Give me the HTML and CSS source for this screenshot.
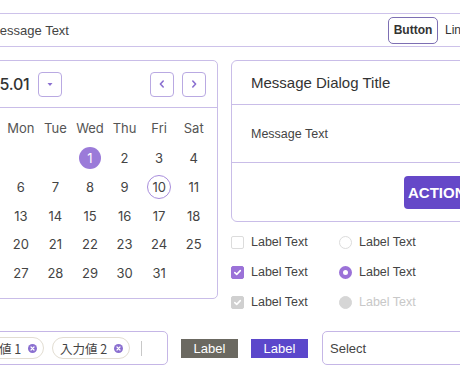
FILE: index.html
```html
<!DOCTYPE html>
<html>
<head>
<meta charset="utf-8">
<link rel="stylesheet" href="styles.css">
</head>
<body>
<div class="page">
  <div class="topbar">
    <span class="topbar-text">Message Text</span>
    <button class="btn-outline">Button</button>
    <a class="link">Link</a>
  </div>

  <div class="main">
    <div class="calendar">
      <div class="cal-head">
        <span class="cal-title">2025.01</span>
        <button class="icon-btn"><svg width="8" height="5" viewBox="0 0 8 5"><path d="M1.5 1h5L4 4z" fill="#8a6fd0"/></svg></button>
        <span class="spacer"></span>
        <button class="icon-btn"><svg width="10" height="10" viewBox="0 0 10 10"><path d="M6.2 2L3.4 5l2.8 3" fill="none" stroke="#8a6fd0" stroke-width="1.6" stroke-linecap="round" stroke-linejoin="round"/></svg></button>
        <button class="icon-btn"><svg width="10" height="10" viewBox="0 0 10 10"><path d="M3.8 2l2.8 3-2.8 3" fill="none" stroke="#8a6fd0" stroke-width="1.6" stroke-linecap="round" stroke-linejoin="round"/></svg></button>
      </div>
      <div class="cal-grid">
        <span class="dow">Sun</span><span class="dow">Mon</span><span class="dow">Tue</span><span class="dow">Wed</span><span class="dow">Thu</span><span class="dow">Fri</span><span class="dow">Sat</span>
        <span></span><span></span><span></span><span class="day"><i class="sel">1</i></span><span class="day">2</span><span class="day">3</span><span class="day">4</span>
        <span class="day">5</span><span class="day">6</span><span class="day">7</span><span class="day">8</span><span class="day">9</span><span class="day"><i class="today">10</i></span><span class="day">11</span>
        <span class="day">12</span><span class="day">13</span><span class="day">14</span><span class="day">15</span><span class="day">16</span><span class="day">17</span><span class="day">18</span>
        <span class="day">19</span><span class="day">20</span><span class="day">21</span><span class="day">22</span><span class="day">23</span><span class="day">24</span><span class="day">25</span>
        <span class="day">26</span><span class="day">27</span><span class="day">28</span><span class="day">29</span><span class="day">30</span><span class="day">31</span><span></span>
      </div>
    </div>

    <div class="side">
      <div class="dialog">
        <div class="dlg-title">Message Dialog Title</div>
        <div class="dlg-body">Message Text</div>
        <div class="dlg-foot"><button class="btn-action">ACTION</button></div>
      </div>
      <div class="choices">
        <label class="choice"><span class="cb"></span>Label Text</label>
        <label class="choice"><span class="rb"></span>Label Text</label>
        <label class="choice"><span class="cb checked"><svg width="9" height="9" viewBox="0 0 9 9"><path d="M1.8 4.6l1.9 1.8 3.6-3.8" fill="none" stroke="#fff" stroke-width="1.6" stroke-linecap="round" stroke-linejoin="round"/></svg></span>Label Text</label>
        <label class="choice"><span class="rb checked"></span>Label Text</label>
        <label class="choice"><span class="cb disabled"><svg width="9" height="9" viewBox="0 0 9 9"><path d="M1.8 4.6l1.9 1.8 3.6-3.8" fill="none" stroke="#fff" stroke-width="1.6" stroke-linecap="round" stroke-linejoin="round"/></svg></span>Label Text</label>
        <label class="choice dim"><span class="rb disabled"></span>Label Text</label>
      </div>
    </div>
  </div>

  <div class="bottom">
    <div class="chips">
      <span class="chip">入力値 1<span class="chip-x"><svg width="9" height="9" viewBox="0 0 9 9"><circle cx="4.5" cy="4.5" r="4.5" fill="#8a6fd0"/><path d="M3 3l3 3M6 3L3 6" stroke="#fff" stroke-width="1.2" stroke-linecap="round"/></svg></span></span>
      <span class="chip">入力値 2<span class="chip-x"><svg width="9" height="9" viewBox="0 0 9 9"><circle cx="4.5" cy="4.5" r="4.5" fill="#8a6fd0"/><path d="M3 3l3 3M6 3L3 6" stroke="#fff" stroke-width="1.2" stroke-linecap="round"/></svg></span></span>
      <span class="caret"></span>
    </div>
    <span class="tag tag-gray">Label</span>
    <span class="tag tag-purple">Label</span>
    <div class="select">Select</div>
  </div>
</div>
</body>
</html>
```

FILE: styles.css
```css
* { box-sizing: border-box; }
html, body { margin: 0; padding: 0; background: #fff; overflow: hidden; }
body { width: 460px; height: 380px; font-family: "Liberation Sans", Arial, sans-serif; color: #444; }
button { font-family: inherit; cursor: pointer; }

.page {
  margin-left: -40px;
  width: 560px;
  padding-top: 13px;
  display: flex;
  flex-direction: column;
}

.topbar {
  height: 34px;
  border-top: 1px solid #cdc2ea;
  border-bottom: 1px solid #cdc2ea;
  display: flex;
  align-items: center;
  padding: 0 53px 0 29px;
}
.topbar-text { flex: 1; font-size: 13px; color: #444; }
.btn-outline {
  height: 27px;
  width: 50px;
  padding: 0;
  border: 1px solid #7d6fb3;
  border-radius: 5px;
  background: #fff;
  font-size: 12px;
  font-weight: bold;
  color: #333;
}
.link { margin-left: 7px; font-size: 12px; color: #333; }

.main {
  margin-top: 13px;
  display: flex;
  gap: 13px;
}

.calendar {
  width: 258px;
  height: 239px;
  border: 1px solid #c9bde8;
  border-radius: 5px;
  display: flex;
  flex-direction: column;
}
.cal-head {
  height: 47px;
  border-bottom: 1px solid #c9bde8;
  display: flex;
  align-items: center;
  gap: 8px;
  padding: 0 11px 0 9px;
  font-family: Inter, "Noto Sans", sans-serif;
}
.cal-title { font-size: 16px; font-weight: 500; color: #333; letter-spacing: -0.2px; }
.spacer { flex: 1; }
.icon-btn {
  width: 24px;
  height: 25px;
  padding: 0;
  border: 1px solid #b9a9e2;
  border-radius: 4px;
  background: #fff;
  display: flex;
  align-items: center;
  justify-content: center;
}
.cal-grid {
  display: grid;
  grid-template-columns: repeat(7, 1fr);
  grid-auto-rows: 28.6px;
  padding: 6px 6px 0 8px;
  font-family: Inter, "Noto Sans", sans-serif;
  font-size: 13px;
  color: #444;
}
.dow, .day { display: flex; align-items: center; justify-content: center; }
.dow { color: #555; }
.cal-grid .day { padding-top: 3px; }
.day i { font-style: normal; }
.sel {
  width: 22px; height: 22px; border-radius: 50%;
  background: #9b7bd9; color: #fff;
  display: flex; align-items: center; justify-content: center;
}
.today {
  width: 24px; height: 24px; border-radius: 50%;
  border: 1px solid #a88ddc;
  display: flex; align-items: center; justify-content: center;
}

.side { display: flex; flex-direction: column; }
.dialog {
  width: 280px;
  height: 162px;
  border: 1px solid #c9bde8;
  border-radius: 6px;
  display: flex;
  flex-direction: column;
}
.dlg-title {
  height: 44px;
  border-bottom: 1px solid #c9bde8;
  padding-left: 19px;
  display: flex;
  align-items: center;
  font-size: 15px;
  color: #333;
}
.dlg-body {
  height: 58px;
  border-bottom: 1px solid #c9bde8;
  padding-left: 19px;
  display: flex;
  align-items: center;
  font-size: 12.5px;
  color: #444;
}
.dlg-foot {
  flex: 1;
  display: flex;
  align-items: center;
  padding-left: 172px;
}
.btn-action {
  height: 33px;
  padding: 0 20px 0 4px;
  border: none;
  border-radius: 4px;
  background: #6548c8;
  color: #fff;
  font-size: 15px;
  font-weight: bold;
}

.choices {
  margin-top: 5px;
  display: grid;
  grid-template-columns: 108px 120px;
  grid-auto-rows: 30px;
}
.choice {
  display: flex;
  align-items: center;
  gap: 7px;
  font-size: 12.5px;
  color: #444;
}
.choice.dim { color: #c8c8c8; }
.cb {
  width: 13px; height: 13px;
  border: 1px solid #dcdcdc;
  border-radius: 2px;
  display: flex; align-items: center; justify-content: center;
}
.cb.checked { background: #9b72d8; border-color: #9b72d8; }
.cb.disabled { background: #d0d0d0; border-color: #d0d0d0; }
.rb {
  width: 13px; height: 13px;
  border: 1px solid #dcdcdc;
  border-radius: 50%;
}
.rb.checked { border: 4px solid #9b72d8; background: #fff; }
.rb.disabled { background: #d6d6d6; border-color: #d6d6d6; }

.bottom {
  margin-top: 14px;
  display: flex;
  align-items: center;
  gap: 13px;
}
.chips {
  width: 208px;
  height: 34px;
  border: 1px solid #c5b6e6;
  border-radius: 5px;
  display: flex;
  align-items: center;
  gap: 8px;
  padding-left: 5px;
}
.chip {
  height: 22px;
  width: 78px;
  border: 1px solid #e2ddd2;
  border-radius: 11px;
  display: flex;
  align-items: center;
  justify-content: space-between;
  padding: 0 6px 0 7px;
  font-family: "Noto Sans CJK JP", "Noto Sans", sans-serif;
  font-size: 12.5px;
  color: #444;
}
.chip-x { display: flex; }
.caret { width: 1px; height: 15px; background: #c8c8c8; margin-left: 3px; }
.tag {
  height: 19px;
  width: 57px;
  display: flex;
  align-items: center;
  justify-content: center;
  font-size: 13px;
  color: #fff;
}
.tag-gray { background: #6b6961; }
.tag-purple { background: #5b47cb; }
.select {
  width: 180px;
  height: 34px;
  margin-left: 1px;
  border: 1px solid #c5b6e6;
  border-radius: 5px;
  display: flex;
  align-items: center;
  padding-left: 7px;
  font-size: 13px;
  color: #444;
}
```
